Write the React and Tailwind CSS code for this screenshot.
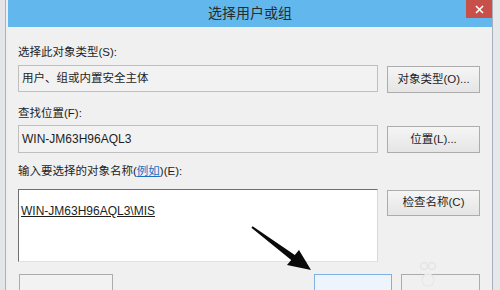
import React from 'react';

const font = { fontFamily: '"Liberation Sans", "Noto Sans CJK SC", sans-serif' };

const Button = ({ children, className = '' }) => (
  <div
    className={`flex items-center justify-center border border-[#acacac] bg-gradient-to-b from-[#f5f5f5] to-[#e5e5e5] text-[11.5px] text-[#1e1e1e] ${className}`}
  >
    {children}
  </div>
);

const ReadonlyBox = ({ children, className = '' }) => (
  <div className={`flex items-center border border-[#bfbfbf] bg-[#f2f2f2] pl-[3px] text-[11.5px] text-[#1e1e1e] ${className}`}>
    {children}
  </div>
);

export default function App() {
  return (
    <div className="relative flex h-[290px] w-[500px] overflow-hidden bg-[#e6e7e9]" style={font}>
      {/* left window frame */}
      <div className="flex w-[8px] shrink-0">
        <div className="w-[5px] bg-[#e3e5e8]" />
        <div className="w-[1px] bg-[#aab3bd]" />
        <div className="w-[2px] bg-[#eceef0]" />
      </div>

      {/* dialog */}
      <div className="flex w-[484px] shrink-0 flex-col">
        <div className="relative flex h-[27px] shrink-0 items-center justify-center bg-[#62b8ec]">
          <span className="text-[14px] text-[#2a2a2a]">选择用户或组</span>
          <div className="absolute right-0 top-0 flex h-[18px] w-[26px] items-center justify-center bg-[#c8504b]">
            <svg width="9" height="9" viewBox="0 0 9 9">
              <path d="M1 1 L8 8 M8 1 L1 8" stroke="#fff" strokeWidth="1.6" />
            </svg>
          </div>
        </div>

        <div className="flex flex-1 flex-col bg-[#f0f0f0] pl-[10px] pr-[12px] text-[#1e1e1e]">
          <div className="mt-[18px] h-[14px] text-[11.5px] leading-[14px]">选择此对象类型(S):</div>
          <div className="mt-[6px] flex items-start gap-[9px]">
            <ReadonlyBox className="h-[27px] w-[360px]">用户、组或内置安全主体</ReadonlyBox>
            <Button className="mt-[1px] h-[27px] w-[93px]">对象类型(O)...</Button>
          </div>

          <div className="mt-[13px] h-[14px] text-[11.5px] leading-[14px]">查找位置(F):</div>
          <div className="mt-[5px] flex items-start gap-[9px]">
            <ReadonlyBox className="h-[28px] w-[360px] text-[12px]">WIN-JM63H96AQL3</ReadonlyBox>
            <Button className="mt-[1px] h-[27px] w-[93px]">位置(L)...</Button>
          </div>

          <div className="mt-[11px] h-[14px] text-[11.5px] leading-[14px]">
            输入要选择的对象名称(<span className="text-[#1d6fc2] underline">例如</span>)(E):
          </div>
          <div className="mt-[11px] flex items-start gap-[9px]">
            <div className="h-[73px] w-[360px] border border-b-[#e2e2e2] border-l-[#6f6f6f] border-r-[#d8d8d8] border-t-[#6f6f6f] bg-white pl-[2px] pt-[8px]">
              <span className="text-[12px] leading-[14px] underline">WIN-JM63H96AQL3\MIS</span>
            </div>
            <Button className="mt-[1px] h-[26px] w-[93px]">检查名称(C)</Button>
          </div>

          <div className="mt-[12px] flex items-start">
            <div className="ml-[1px] h-[30px] w-[94px] border border-[#acacac] bg-[#f2f2f2]" />
            <div className="flex-1" />
            <div className="h-[30px] w-[78px] border border-[#7fb2e3] bg-[#eef4fb]" />
            <div className="ml-[9px] h-[30px] w-[79px] border border-[#acacac] bg-[#f0f0f0]" />
          </div>
        </div>
      </div>

      {/* right window frame */}
      <div className="flex flex-1">
        <div className="w-[1px] bg-[#a7b0bb]" />
        <div className="flex-1 bg-[#e7e8ea]" />
      </div>

      {/* annotation arrow and watermark */}
      <svg className="pointer-events-none absolute left-0 top-0" width="500" height="290">
        <polygon
          points="251.4,227.8 252.6,226.2 294.8,255.1 299,250 311,270 287,265 291.2,259.9"
          fill="#0a0a0a"
        />
        <circle cx="424" cy="266" r="3.5" fill="none" stroke="#e4e4e4" strokeWidth="1.5" />
        <circle cx="432" cy="266" r="3.5" fill="none" stroke="#e4e4e4" strokeWidth="1.5" />
        <circle cx="428" cy="280" r="6" fill="none" stroke="#e8e8e8" strokeWidth="1.5" />
      </svg>
    </div>
  );
}
